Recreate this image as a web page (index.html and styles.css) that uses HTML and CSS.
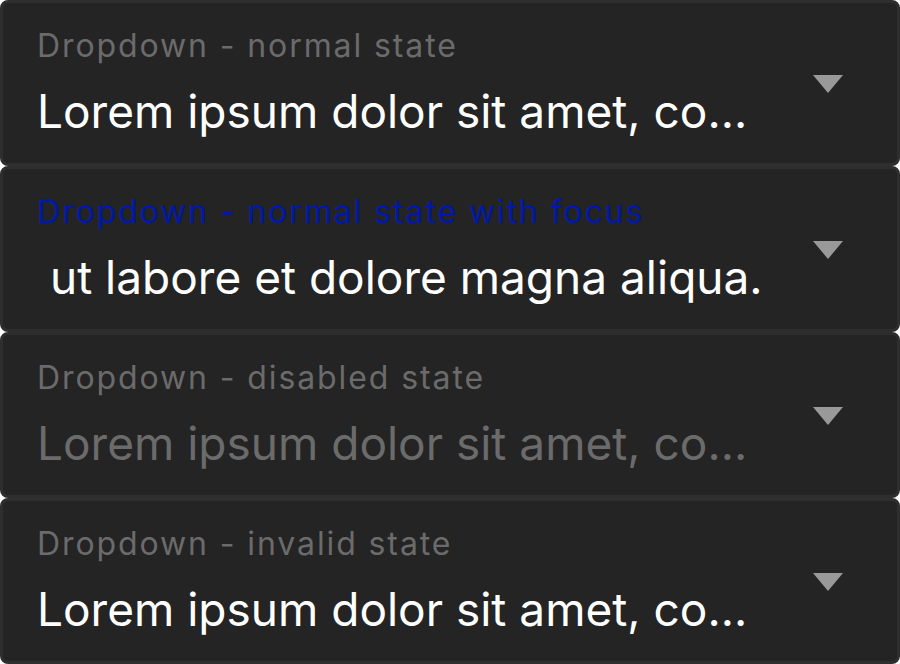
FILE: index.html
```html
<!DOCTYPE html>
<html>
<head>
<meta charset="utf-8">
<link rel="stylesheet" href="styles.css">
</head>
<body>
<div class="list">
  <div class="dropdown">
    <div class="text">
      <div class="label">Dropdown - normal state</div>
      <div class="value">Lorem ipsum dolor sit amet, co...</div>
    </div>
    <svg class="arrow" width="30" height="18" viewBox="0 0 30 18"><polygon points="0,0 30,0 15,18" fill="#999999"/></svg>
  </div>
  <div class="dropdown">
    <div class="text">
      <div class="label focus">Dropdown - normal state with focus</div>
      <div class="value"> ut labore et dolore magna aliqua.</div>
    </div>
    <svg class="arrow" width="30" height="18" viewBox="0 0 30 18"><polygon points="0,0 30,0 15,18" fill="#999999"/></svg>
  </div>
  <div class="dropdown">
    <div class="text">
      <div class="label">Dropdown - disabled state</div>
      <div class="value disabled">Lorem ipsum dolor sit amet, co...</div>
    </div>
    <svg class="arrow" width="30" height="18" viewBox="0 0 30 18"><polygon points="0,0 30,0 15,18" fill="#999999"/></svg>
  </div>
  <div class="dropdown">
    <div class="text">
      <div class="label">Dropdown - invalid state</div>
      <div class="value">Lorem ipsum dolor sit amet, co...</div>
    </div>
    <svg class="arrow" width="30" height="18" viewBox="0 0 30 18"><polygon points="0,0 30,0 15,18" fill="#999999"/></svg>
  </div>
</div>
</body>
</html>
```
FILE: styles.css
```css
html, body {
  margin: 0;
  padding: 0;
  background: #ffffff;
}
.list {
  display: flex;
  flex-direction: column;
  width: 900px;
}
.dropdown {
  box-sizing: border-box;
  height: 166px;
  background: #242424;
  border: 3px solid #2e2e2e;
  border-radius: 8px;
  display: flex;
  align-items: flex-start;
  padding: 0 54px 0 34px;
  font-family: Inter, "Noto Sans", sans-serif;
}
.text {
  flex: 1;
  min-width: 0;
}
.label {
  font-size: 32px;
  line-height: 38px;
  letter-spacing: 1.9px;
  color: #6b6b6b;
  margin-top: 24px;
  white-space: pre;
}
.label.focus {
  color: #0019a8;
}
.value {
  font-size: 46px;
  line-height: 54px;
  color: #ffffff;
  margin-top: 19px;
  white-space: pre;
}
.value.disabled {
  color: #6b6b6b;
}
.arrow {
  margin-top: 72px;
  flex: none;
}
```
